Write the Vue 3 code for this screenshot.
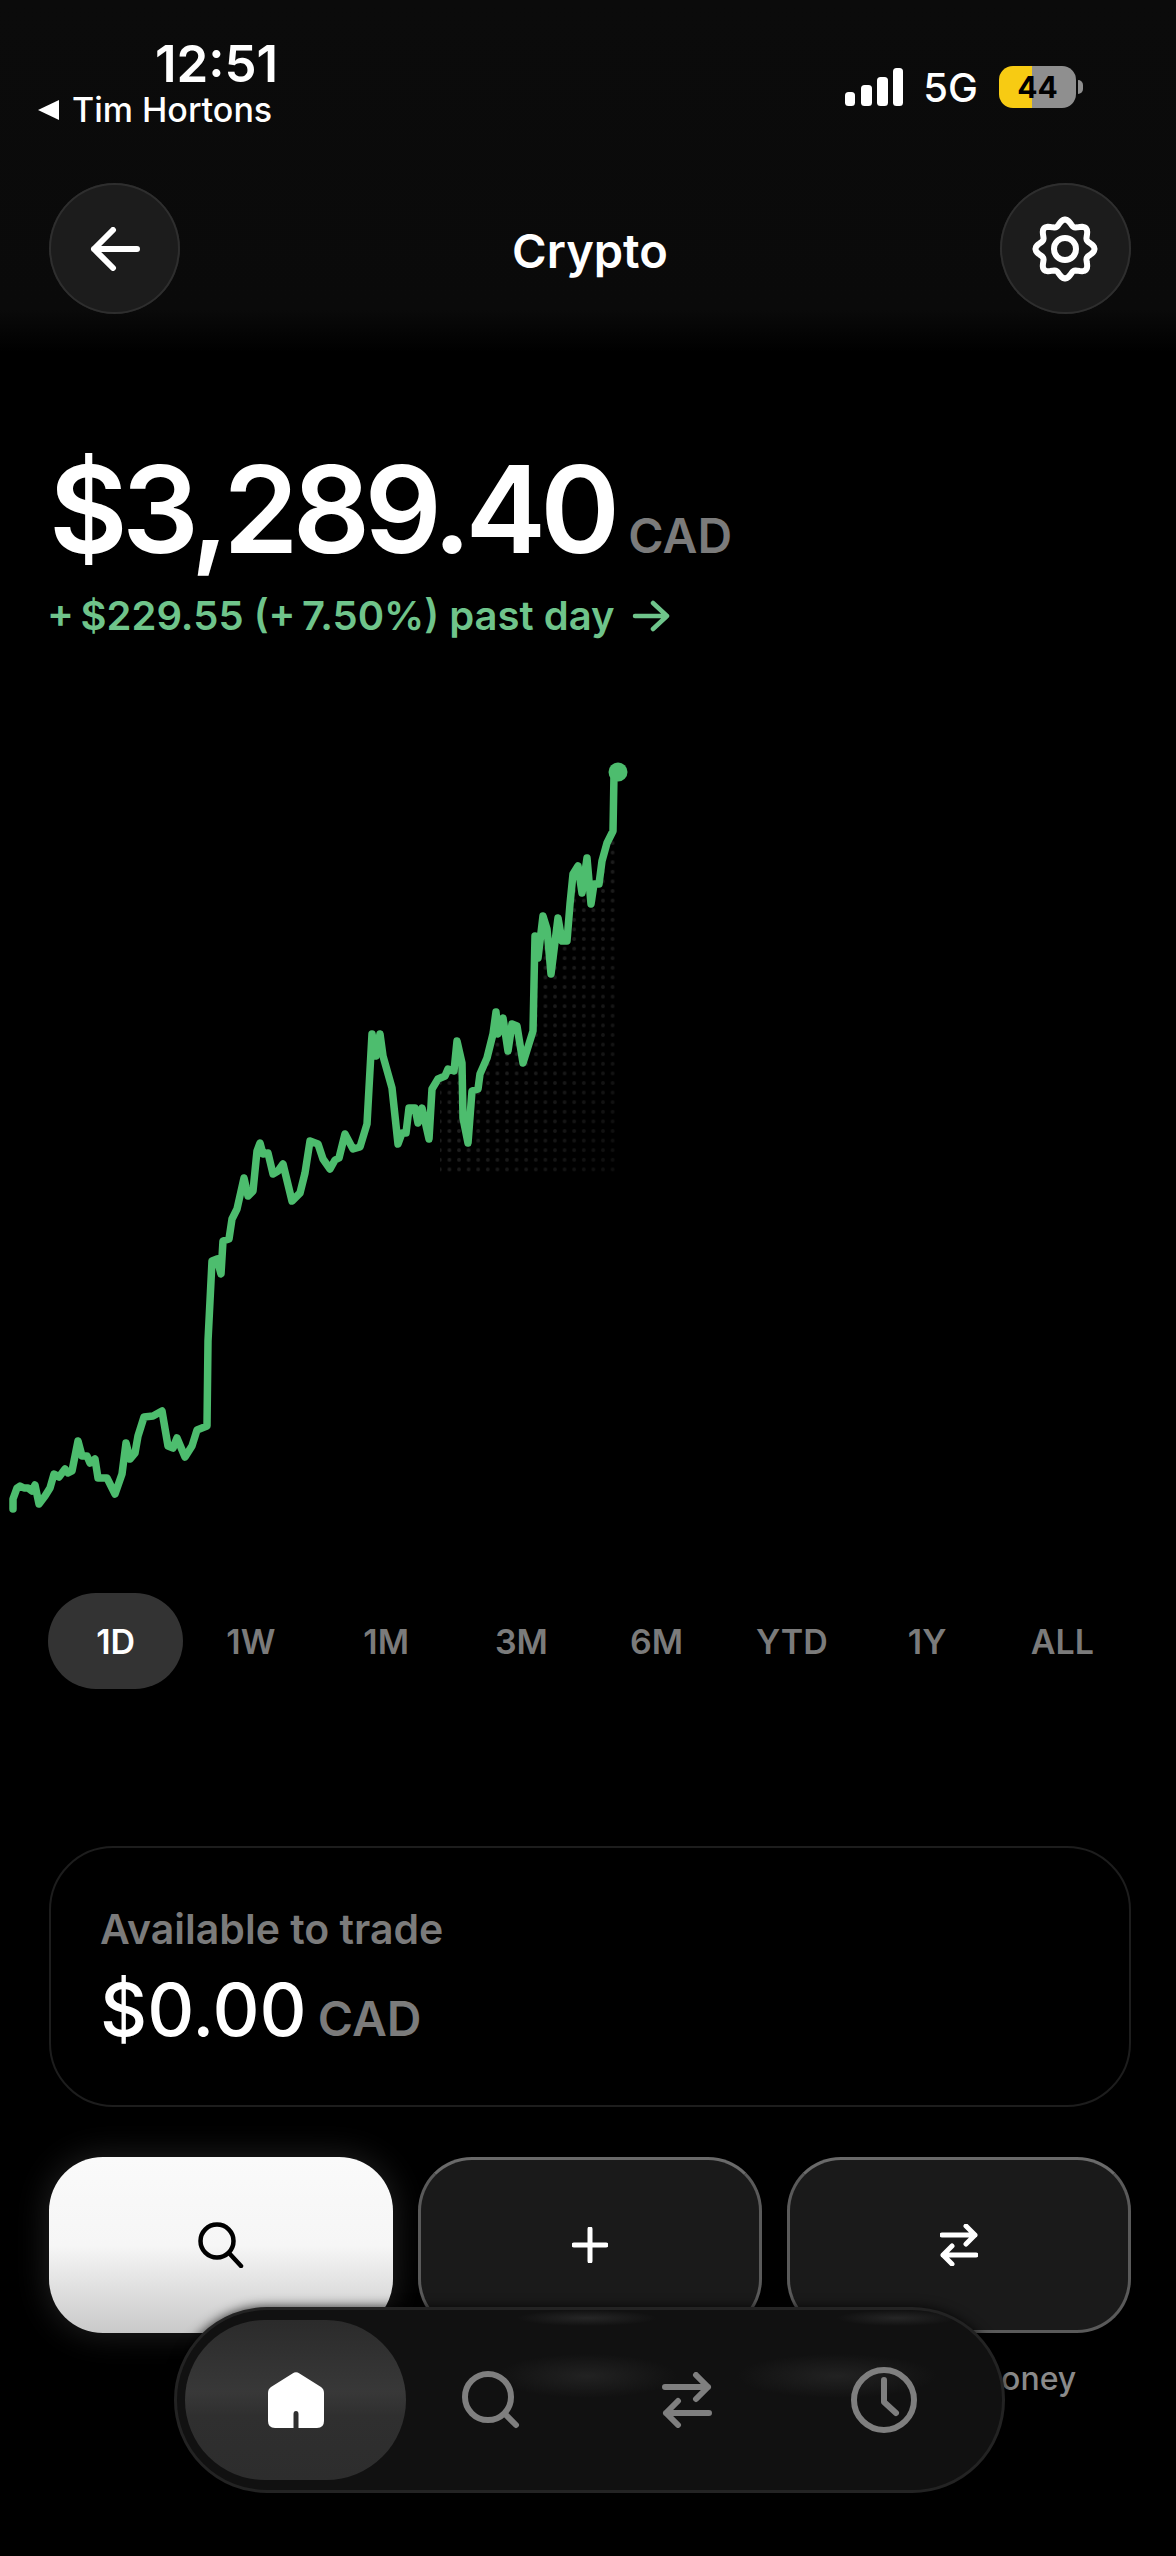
<template>
  <div class="screen">
    <header class="top">
      <div class="status">
        <div class="status-left">
          <div class="time">12:51</div>
          <div class="carrier"><span class="tri"></span>Tim Hortons</div>
        </div>
        <div class="status-right">
          <svg class="signal" width="58" height="38" viewBox="0 0 58 38">
            <rect x="0" y="24" width="10" height="14" rx="3.5" fill="#fff" />
            <rect x="16" y="17" width="11" height="21" rx="3.5" fill="#fff" />
            <rect x="32" y="9" width="11" height="29" rx="3.5" fill="#fff" />
            <rect x="48" y="0" width="10" height="38" rx="3.5" fill="#fff" />
          </svg>
          <span class="net">5G</span>
          <div class="battery">44</div>
        </div>
      </div>
      <div class="navbar">
        <button class="round">
          <svg width="50" height="44" viewBox="0 0 50 44" fill="none" stroke="#fff" stroke-width="6" stroke-linecap="round" stroke-linejoin="round">
            <path d="M4 22H47M23 3L4 22L23 41" />
          </svg>
        </button>
        <div class="title">Crypto</div>
        <button class="round">
          <svg width="70" height="70" viewBox="0 0 70 70" fill="none" stroke="#fff" stroke-width="6" stroke-linejoin="round">
            <path :d="gearPath" />
            <circle cx="35" cy="35" r="11" />
          </svg>
        </button>
      </div>
    </header>

    <section class="hero">
      <div class="balance"><span class="amount">$3,289.40</span><span class="cad">CAD</span></div>
      <div class="change">
        <span>+&#8201;$229.55 (+&#8201;7.50%) past day</span>
        <svg width="38" height="32" viewBox="0 0 38 32" fill="none" stroke="#6fc48b" stroke-width="4.5" stroke-linecap="round" stroke-linejoin="round">
          <path d="M3 16H35M21 3L35 16L21 29" />
        </svg>
      </div>
    </section>

    <svg class="chart" width="1176" height="800" viewBox="0 740 1176 800">
      <defs>
        <pattern id="dots" x="3" y="2" width="9.6" height="9.6" patternUnits="userSpaceOnUse">
          <circle cx="4.8" cy="4.8" r="1.9" fill="#262626" />
        </pattern>
        <clipPath id="under"><path :d="areaPath" /></clipPath>
        <linearGradient id="fade" x1="0" y1="0" x2="1" y2="1">
          <stop offset="0" stop-color="#000" />
          <stop offset="0.45" stop-color="#fff" stop-opacity="0.8" />
          <stop offset="1" stop-color="#555" />
        </linearGradient>
        <mask id="dotMask"><rect x="440" y="800" width="180" height="375" fill="url(#fade)" /></mask>
      </defs>
      <rect x="440" y="800" width="180" height="375" fill="url(#dots)" clip-path="url(#under)" mask="url(#dotMask)" />
      <path :d="linePath" fill="none" stroke="#4dbd6e" stroke-width="7.5" stroke-linejoin="round" stroke-linecap="round" />
      <circle cx="618" cy="771" r="9.5" fill="#4dbd6e" />
    </svg>

    <div class="ranges">
      <div v-for="r in ranges" :key="r" class="range" :class="{ on: r === '1D' }">{{ r }}</div>
    </div>

    <section class="card">
      <div class="card-label">Available to trade</div>
      <div class="card-value"><span class="card-amount">$0.00</span><span class="cad card-cad">CAD</span></div>
    </section>

    <div class="actions">
      <div class="action">
        <button class="tile light">
          <svg width="46" height="46" viewBox="0 0 46 46" fill="none" stroke="#000" stroke-width="4.5" stroke-linecap="round">
            <circle cx="19" cy="19" r="16.5" />
            <path d="M31 31L43 44" />
          </svg>
        </button>
      </div>
      <div class="action">
        <button class="tile">
          <svg width="36" height="36" viewBox="0 0 36 36" fill="none" stroke="#fff" stroke-width="5" stroke-linecap="round">
            <path d="M18 2V34M2 18H34" />
          </svg>
        </button>
      </div>
      <div class="action">
        <button class="tile">
          <svg width="38" height="42" viewBox="0 0 38 42" fill="none" stroke="#fff" stroke-width="5" stroke-linecap="round" stroke-linejoin="round">
            <path d="M2 11H35M26 2L35 11L26 20M36 31H3M12 22L3 31L12 40" />
          </svg>
        </button>
        <div class="action-label">Transfer money</div>
      </div>
    </div>

    <nav class="tabbar">
      <div class="tab home">
        <svg width="56" height="56" viewBox="0 0 56 56">
          <path fill="#fff" fill-rule="evenodd" d="M24.5 1.5Q28 -1 31.5 1.5L53 15Q56 17 56 21V49Q56 56 49 56H7Q0 56 0 49V21Q0 17 3 15ZM25.5 56H30.5V42Q30.5 39 28 39Q25.5 39 25.5 42Z" />
        </svg>
      </div>
      <div class="tab">
        <svg width="58" height="58" viewBox="0 0 58 58" fill="none" stroke="#7f7f7f" stroke-width="6" stroke-linecap="round">
          <circle cx="26" cy="26" r="23" />
          <path d="M43 43L54 54" />
        </svg>
      </div>
      <div class="tab">
        <svg width="50" height="56" viewBox="0 0 50 56" fill="none" stroke="#7f7f7f" stroke-width="6" stroke-linecap="round" stroke-linejoin="round">
          <path d="M3 15H46M34 3L46 15L34 27M47 41H4M16 29L4 41L16 53" />
        </svg>
      </div>
      <div class="tab">
        <svg width="68" height="68" viewBox="0 0 68 68" fill="none" stroke="#7f7f7f" stroke-width="6" stroke-linecap="round" stroke-linejoin="round">
          <circle cx="34" cy="34" r="30" />
          <path d="M34 14V36L46 47" />
        </svg>
      </div>
    </nav>
  </div>
</template>

<script setup>
const ranges = ['1D', '1W', '1M', '3M', '6M', 'YTD', '1Y', 'ALL']

// traced from the price line, in page pixels
const points = [
  [13, 1508], [13, 1498], [17, 1487], [20, 1485], [24, 1487], [28, 1487], [32, 1490], [35, 1484], [39, 1503],
  [45, 1495], [50, 1487], [54, 1473], [59, 1476], [65, 1468], [68, 1472], [72, 1470], [78, 1440], [82, 1455],
  [87, 1455], [90, 1462], [95, 1458], [98, 1477], [107, 1477], [115, 1493], [122, 1473], [126, 1442], [130, 1458],
  [135, 1452], [138, 1435], [144, 1416], [153, 1415], [162, 1410], [168, 1445], [173, 1447], [177, 1437], [185, 1456],
  [192, 1445], [197, 1429], [207, 1425], [208, 1340], [212, 1260], [217, 1258], [221, 1273], [223, 1240], [229, 1238],
  [232, 1218], [237, 1208], [244, 1177], [248, 1195], [253, 1190], [257, 1150], [260, 1142], [263, 1153], [268, 1152],
  [273, 1173], [278, 1170], [283, 1163], [292, 1200], [300, 1192], [305, 1172], [310, 1140], [318, 1143], [323, 1158],
  [330, 1168], [335, 1159], [339, 1157], [345, 1133], [353, 1148], [360, 1146], [367, 1123], [372, 1033], [376, 1055],
  [380, 1033], [383, 1055], [392, 1087], [398, 1143], [402, 1132], [406, 1132], [409, 1107], [415, 1107], [418, 1122],
  [422, 1107], [429, 1138], [432, 1088], [438, 1078], [445, 1075], [448, 1068], [454, 1070], [457, 1040], [462, 1062],
  [463, 1117], [468, 1142], [472, 1090], [478, 1088], [480, 1073], [487, 1057], [493, 1033], [496, 1011], [498, 1033],
  [503, 1017], [508, 1050], [512, 1023], [517, 1025], [523, 1062], [533, 1030], [535, 935], [538, 957], [543, 915],
  [547, 928], [551, 973], [558, 917], [562, 940], [567, 940], [570, 903], [573, 873], [578, 865], [582, 892],
  [587, 857], [591, 903], [594, 883], [599, 883], [602, 860], [607, 842], [613, 830], [614, 773], [618, 771]
]

const linePath = 'M' + points.map((p) => p.join(' ')).join('L')
const areaPath = linePath + 'L618 1180L13 1180Z'

// wavy eight lobed outline of the settings icon
const gearPath = (() => {
  let d = ''
  for (let i = 0; i < 96; i++) {
    const a = (i / 96) * Math.PI * 2 - Math.PI / 2
    const r = 26.5 + 3 * Math.cos(8 * (a + Math.PI / 2))
    d += (i ? 'L' : 'M') + (35 + r * Math.cos(a)).toFixed(2) + ' ' + (35 + r * Math.sin(a)).toFixed(2)
  }
  return d + 'Z'
})()
</script>

<style>
html,
body {
  background: #000;
}
</style>

<style scoped>
.screen {
  position: relative;
  width: 1176px;
  height: 2556px;
  overflow: hidden;
  background: #000;
  color: #fff;
  font-family: Inter, "Liberation Sans", sans-serif;
  display: flex;
  flex-direction: column;
}

button {
  border: 0;
  padding: 0;
  display: flex;
  align-items: center;
  justify-content: center;
}

.top {
  height: 352px;
  background: linear-gradient(#0b0b0b 0, #0a0a0a 88%, #000 100%);
  padding: 0 45px 0 38px;
  box-sizing: border-box;
}

.status {
  height: 183px;
  display: flex;
  justify-content: space-between;
  align-items: flex-start;
}

.status-left {
  padding-top: 35px;
  display: flex;
  flex-direction: column;
  align-items: flex-end;
}

.time {
  font-size: 51px;
  font-weight: 600;
  line-height: 58px;
  margin-right: -4px;
}

.carrier {
  display: flex;
  align-items: center;
  font-size: 34px;
  font-weight: 500;
  line-height: 40px;
  margin: -3px 2px 0 0;
}

.tri {
  width: 0;
  height: 0;
  border-style: solid;
  border-width: 10px 21px 10px 0;
  border-color: transparent #fff transparent transparent;
  margin-right: 13px;
}

.status-right {
  margin: 66px 55px 0 0;
  display: flex;
  align-items: center;
  height: 42px;
}

.net {
  font-size: 40px;
  font-weight: 500;
  margin-left: 20px;
}

.battery {
  position: relative;
  width: 77px;
  height: 42px;
  margin-left: 21px;
  border-radius: 14px;
  background: linear-gradient(90deg, #f7cb13 0, #f7cb13 43%, #8f8f8f 43%, #8f8f8f 100%);
  color: #000;
  font-size: 30px;
  font-weight: 700;
  line-height: 42px;
  text-align: center;
}

.battery::after {
  content: "";
  position: absolute;
  right: -7px;
  top: 14px;
  width: 5px;
  height: 14px;
  border-radius: 0 5px 5px 0;
  background: #8f8f8f;
}

.navbar {
  display: flex;
  align-items: center;
  justify-content: space-between;
  margin: 0 0 0 11px;
}

.round {
  width: 131px;
  height: 131px;
  border-radius: 50%;
  background: #1c1c1c;
  box-shadow: inset 0 0 0 2px #2e2e2e;
}

.title {
  font-size: 47px;
  font-weight: 600;
  padding-top: 3px;
}

.hero {
  padding: 92px 49px 0;
}

.balance {
  display: flex;
  align-items: baseline;
}

.amount {
  font-size: 121px;
  font-weight: 600;
  line-height: 130px;
  letter-spacing: -5.8px;
}

.cad {
  color: #7b7b7b;
  font-size: 48px;
  font-weight: 600;
  margin-left: 14px;
}

.change {
  display: flex;
  align-items: center;
  gap: 17px;
  color: #6fc48b;
  font-size: 40px;
  font-weight: 600;
  line-height: 50px;
  margin: 17px 0 0 -2px;
}

.chart {
  display: block;
  margin-top: 100px;
}

.ranges {
  display: grid;
  grid-template-columns: repeat(8, 1fr);
  margin: 52px 46px 0 48px;
}

.range {
  height: 96px;
  border-radius: 48px;
  display: flex;
  align-items: center;
  justify-content: center;
  color: #7b7b7b;
  font-size: 34px;
  font-weight: 600;
}

.range.on {
  background: #333;
  color: #fff;
}

.card {
  margin: 157px 45px 0 49px;
  height: 261px;
  box-sizing: border-box;
  padding: 57px 49px 0;
  border: 2px solid #1d1d1d;
  border-radius: 64px;
}

.card-label {
  color: #7b7b7b;
  font-size: 41px;
  font-weight: 600;
  line-height: 48px;
}

.card-value {
  display: flex;
  align-items: baseline;
  margin-top: 13px;
}

.card-amount {
  font-size: 73px;
  font-weight: 500;
  line-height: 88px;
}

.card-cad {
  font-size: 48px;
  margin-left: 11px;
}

.actions {
  display: grid;
  grid-template-columns: repeat(3, 344px);
  justify-content: space-between;
  margin: 50px 45px 0 49px;
}

.tile {
  width: 344px;
  height: 176px;
  box-sizing: border-box;
  border-radius: 54px;
  background: #1a1a1a;
  border: 3px solid #5a5a5a;
  border-top-color: #6a6a6a;
}

.tile.light {
  border: 0;
  background: linear-gradient(#fafafa 0, #f6f6f6 50%, #c9c9c9 100%);
  box-shadow: 0 0 34px rgba(255, 255, 255, 0.14);
}

.action-label {
  color: #8a8a8a;
  font-size: 32px;
  font-weight: 500;
  line-height: 40px;
  margin: 26px 6px 0 0;
  text-align: center;
}

.tabbar {
  position: absolute;
  left: 174px;
  top: 2307px;
  width: 831px;
  height: 186px;
  box-sizing: border-box;
  padding: 10px 8px;
  border: 3px solid #232323;
  border-radius: 93px;
  background:
    radial-gradient(ellipse 90px 22px at 410px 66px, #222, transparent),
    radial-gradient(ellipse 100px 22px at 660px 66px, #222, transparent),
    radial-gradient(ellipse 70px 8px at 410px 8px, #262626, transparent),
    radial-gradient(ellipse 60px 8px at 720px 8px, #262626, transparent),
    #111;
  display: grid;
  grid-template-columns: 221px 170px 222px 172px;
  align-items: center;
  justify-items: center;
  box-shadow: 0 0 12px rgba(0, 0, 0, 0.8);
}

.tab {
  display: flex;
  align-items: center;
  justify-content: center;
}

.tab.home {
  width: 221px;
  height: 160px;
  border-radius: 80px;
  background: linear-gradient(#2b2b2b, #383838 45%, #2f2f2f 60%, #2d2d2d);
}
</style>
